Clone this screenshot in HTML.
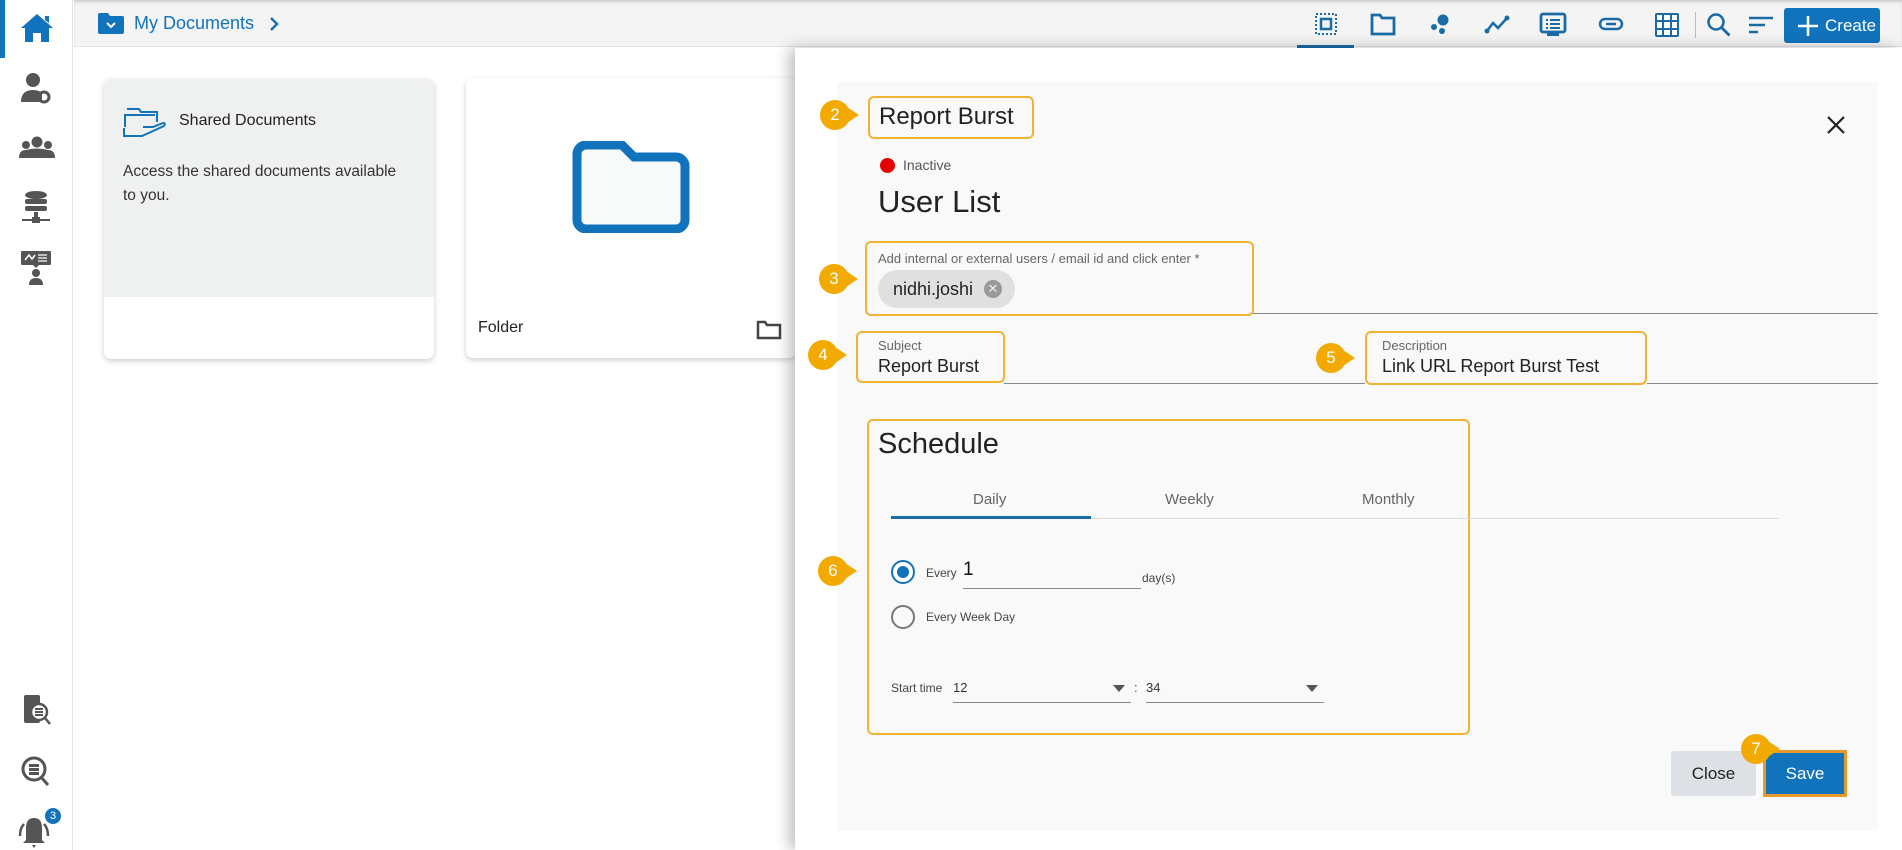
<!DOCTYPE html>
<html><head><meta charset="utf-8"><style>
*{box-sizing:border-box;margin:0;padding:0}
body{width:1902px;height:850px;overflow:hidden;background:#fff;font-family:"Liberation Sans",sans-serif;color:#222;position:relative}
.a{position:absolute}
.badge{position:absolute;width:30px;height:30px;border-radius:50%;background:#f2a900;color:#fff;font-size:17px;text-align:center;line-height:30px}
.badge:after{content:"";position:absolute;right:-9px;top:7px;border-left:12px solid #f2a900;border-top:8px solid transparent;border-bottom:8px solid transparent}
.ob{position:absolute;border:2.5px solid #f2b233;border-radius:6px}
.lbl{font-size:13px;color:#666}
.ic{position:absolute;fill:#555}
.ti{position:absolute;top:12px}
</style></head><body>
<div class="a" style="left:0;top:0;width:73px;height:850px;background:#fff;border-right:1px solid #e2e2e2"></div>
<div class="a" style="left:0;top:0;width:5px;height:58px;background:#1273bd"></div>
<svg class="a" style="left:19px;top:12px" width="36" height="32" viewBox="0 0 36 32"><path d="M18 2 L2 16 L6 16 L6 30 L14 30 L14 21 L22 21 L22 30 L30 30 L30 16 L34 16 Z M26 4 h4 v7 l-4 -3z" fill="#1273bd"/></svg>
<svg class="ic" style="left:20px;top:72px" width="32" height="32" viewBox="0 0 32 32"><circle cx="13" cy="8" r="7"/><path d="M1 30 q0-12 12-12 q6 0 9 3 l0 9z"/><circle cx="24" cy="25" r="5" fill="none" stroke="#555" stroke-width="3"/></svg>
<svg class="ic" style="left:19px;top:136px" width="36" height="26" viewBox="0 0 36 26"><circle cx="18" cy="6" r="5.5"/><circle cx="7" cy="9" r="4"/><circle cx="29" cy="9" r="4"/><path d="M0 22 q0-8 7-8 q11-3 22 0 q7 0 7 8z"/></svg>
<svg class="ic" style="left:21px;top:190px" width="30" height="36" viewBox="0 0 30 36"><ellipse cx="15" cy="5" rx="11" ry="4"/><rect x="4" y="9" width="22" height="5" rx="2"/><rect x="4" y="16" width="22" height="5" rx="2"/><rect x="13" y="22" width="4" height="6"/><rect x="1" y="29" width="28" height="2"/><rect x="11" y="27" width="8" height="6"/></svg>
<svg class="ic" style="left:20px;top:251px" width="32" height="36" viewBox="0 0 32 36"><rect x="1" y="0" width="30" height="14" rx="1"/><path d="M13 14 l3 3 l3 -3z"/><circle cx="16" cy="22" r="4"/><path d="M9 34 q0-7 7-7 q7 0 7 7z"/><path d="M5 9 l4-5 l3 4 l3-4" stroke="#fff" stroke-width="1.5" fill="none"/><path d="M18 4h9M18 7h9M18 10h9" stroke="#fff" stroke-width="1.3"/></svg>
<svg class="ic" style="left:20px;top:694px" width="32" height="34" viewBox="0 0 32 34"><rect x="4" y="1" width="16" height="28" rx="2"/><circle cx="19" cy="18" r="8" fill="#fff" stroke="#555" stroke-width="2.5"/><path d="M15 15h8M15 18h8M15 21h8" stroke="#555" stroke-width="2"/><path d="M25 24 l5 6" stroke="#555" stroke-width="2.5"/></svg>
<svg class="ic" style="left:20px;top:755px" width="32" height="34" viewBox="0 0 32 34"><circle cx="14" cy="14" r="11" fill="none" stroke="#555" stroke-width="3"/><path d="M9 9h10v3h-10zM9 13h10v3h-10zM9 17h10v3h-10z"/><path d="M21 22 l7 8" stroke="#555" stroke-width="3"/></svg>
<svg class="ic" style="left:16px;top:812px" width="36" height="38" viewBox="0 0 36 38"><path d="M18 6 q-8 0 -8 10 v12 l-3 3 h22 l-3 -3 v-12 q0-10 -8-10z"/><path d="M16 33 h4 l-2 3z"/><path d="M4 24 q0-8 4-12 M32 24 q0-8 -4-12" stroke="#555" stroke-width="2.5" fill="none"/></svg>
<div class="a" style="left:45px;top:808px;width:16px;height:16px;border-radius:50%;background:#1273bd;color:#fff;font-size:11px;text-align:center;line-height:16px">3</div>
<div class="a" style="left:74px;top:0;width:1828px;height:47px;background:#f4f4f4;border-bottom:1px solid #e3e3e3;box-shadow:0 3px 4px -2px #bbb inset"></div>
<svg class="a" style="left:98px;top:13px" width="26" height="21" viewBox="0 0 26 21"><path d="M2 0h8l2 3h12a2 2 0 0 1 2 2v14a2 2 0 0 1-2 2h-22a2 2 0 0 1-2-2v-17a2 2 0 0 1 2-2z" fill="#1273bd"/><path d="M9 10 l4 4 l4-4" stroke="#fff" stroke-width="2" fill="none"/></svg>
<div class="a" style="left:134px;top:13px;font-size:18px;color:#1273bd">My Documents</div>
<svg class="a" style="left:268px;top:16px" width="12" height="16"><path d="M3 2 l6 6 l-6 6" stroke="#1273bd" stroke-width="2.5" fill="none"/></svg>
<div class="a" style="left:1297px;top:45px;width:57px;height:3px;background:#1a6aa5"></div>
<svg class="ti" style="left:1314px" width="24" height="24" viewBox="0 0 24 24"><rect x="2" y="2" width="20" height="20" fill="none" stroke="#1a6aa5" stroke-width="2" stroke-dasharray="2 2"/><rect x="7" y="7" width="10" height="10" fill="none" stroke="#1a6aa5" stroke-width="2.5"/></svg>
<svg class="ti" style="left:1370px" width="26" height="24" viewBox="0 0 26 24"><path d="M2 3h8l2 3h12v16h-22z" fill="none" stroke="#1a6aa5" stroke-width="2.8"/></svg>
<svg class="ti" style="left:1428px" width="24" height="24" viewBox="0 0 24 24"><circle cx="15" cy="8" r="5.5" fill="#1a6aa5"/><circle cx="6" cy="15" r="3" fill="#1a6aa5"/><circle cx="14" cy="19" r="3" fill="#1a6aa5"/></svg>
<svg class="ti" style="left:1484px" width="26" height="24" viewBox="0 0 26 24"><path d="M3 19 l6-8 l5 5 l9-10" stroke="#1a6aa5" stroke-width="2.5" fill="none"/><circle cx="3" cy="19" r="2.5" fill="#1a6aa5"/><circle cx="23" cy="6" r="2.5" fill="#1a6aa5"/></svg>
<svg class="ti" style="left:1539px" width="28" height="26" viewBox="0 0 28 26"><rect x="2" y="2" width="24" height="18" rx="2" fill="none" stroke="#1a6aa5" stroke-width="2.8"/><path d="M7 8h2M11 8h10M7 12h2M11 12h10M7 16h2M11 16h10" stroke="#1a6aa5" stroke-width="2"/><rect x="8" y="21" width="12" height="3" fill="#1a6aa5"/></svg>
<svg class="ti" style="left:1598px" width="26" height="24" viewBox="0 0 26 24"><rect x="2" y="7" width="22" height="10" rx="5" fill="none" stroke="#1a6aa5" stroke-width="2.5"/><path d="M8 12h10" stroke="#1a6aa5" stroke-width="2.5"/></svg>
<svg class="ti" style="left:1654px" width="26" height="26" viewBox="0 0 26 26"><rect x="1" y="1" width="24" height="24" rx="2" fill="#1a6aa5"/><path d="M3 3h5v5h-5zM10 3h6v5h-6zM18 3h5v5h-5zM3 10h5v6h-5zM10 10h6v6h-6zM18 10h5v6h-5zM3 18h5v5h-5zM10 18h6v5h-6zM18 18h5v5h-5z" fill="#fff"/></svg>
<div class="a" style="left:1695px;top:12px;width:1px;height:26px;background:#bbb"></div>
<svg class="ti" style="left:1706px" width="26" height="26" viewBox="0 0 26 26"><circle cx="10" cy="10" r="7.5" fill="none" stroke="#1a6aa5" stroke-width="2.5"/><path d="M15.5 15.5 l8 8" stroke="#1a6aa5" stroke-width="2.8"/></svg>
<svg class="ti" style="left:1748px;top:15px" width="26" height="20" viewBox="0 0 26 20"><path d="M1 3h24M1 10h16M1 17h9" stroke="#1a6aa5" stroke-width="2.5"/></svg>
<div class="a" style="left:1784px;top:8px;width:96px;height:35px;background:#1273bd;border-radius:3px;color:#fff;font-size:17px;line-height:35px;padding-left:41px">Create</div>
<svg class="a" style="left:1797px;top:15px" width="22" height="22"><path d="M11 1v20M1 11h20" stroke="#fff" stroke-width="2.5"/></svg>
<div class="a" style="left:104px;top:79px;width:330px;height:280px;background:#fff;border-radius:7px;box-shadow:0 2px 6px rgba(0,0,0,.2);overflow:hidden">
 <div style="height:218px;background:#eff0f0"></div>
</div>
<svg class="a" style="left:123px;top:107px" width="44" height="30" viewBox="0 0 44 30"><path d="M4 2h12l2 3h16v10M2 20v-12h30" fill="none" stroke="#1273bd" stroke-width="2"/><path d="M1 21 v8 h18 l22-10 q2-3 -1-3 l-10 4 h-10" fill="none" stroke="#1273bd" stroke-width="2"/></svg>
<div class="a" style="left:179px;top:112px;font-size:16px;color:#222">Shared Documents</div>
<div class="a" style="left:123px;top:160px;font-size:15.5px;line-height:24px;color:#333;width:285px">Access the shared documents available to you.</div>
<div class="a" style="left:466px;top:78px;width:330px;height:280px;background:#fff;border-radius:7px;box-shadow:0 2px 6px rgba(0,0,0,.2)"></div>
<svg class="a" style="left:572px;top:141px" width="118" height="92" viewBox="0 0 118 92"><path d="M14 4h36l12 12h42a9 9 0 0 1 9 9v54a9 9 0 0 1-9 9h-90a9 9 0 0 1-9-9v-66a9 9 0 0 1 9-9z" fill="#f8f9f9" stroke="#1273bd" stroke-width="9"/></svg>
<div class="a" style="left:478px;top:319px;font-size:16px;color:#222">Folder</div>
<svg class="a" style="left:756px;top:320px" width="26" height="20"><path d="M2 2h7l2 3h13v13h-22z" fill="none" stroke="#444" stroke-width="2.5"/></svg>
<div class="a" style="left:795px;top:48px;width:1107px;height:802px;background:#fff;box-shadow:-6px 0 14px rgba(0,0,0,.25)"></div>
<div class="a" style="left:837px;top:82px;width:1041px;height:749px;background:#f9f9f9"></div>
<div class="ob" style="left:868px;top:96px;width:166px;height:43px"></div>
<div class="a" style="left:879px;top:103px;font-size:24px;color:#222">Report Burst</div>
<div class="badge" style="left:820px;top:100px">2</div>
<svg class="a" style="left:1826px;top:115px" width="20" height="20"><path d="M2 2l16 16M18 2l-16 16" stroke="#222" stroke-width="2.2"/></svg>
<div class="a" style="left:880px;top:158px;width:15px;height:15px;border-radius:50%;background:#e50000"></div>
<div class="a" style="left:903px;top:157px;font-size:14px;color:#555">Inactive</div>
<div class="a" style="left:878px;top:184px;font-size:31px;color:#222">User List</div>
<div class="ob" style="left:865px;top:241px;width:389px;height:75px"></div>
<div class="a lbl" style="left:878px;top:251px">Add internal or external users / email id and click enter *</div>
<div class="a" style="left:878px;top:270px;width:137px;height:38px;border-radius:19px;background:#e0e0e0"></div>
<div class="a" style="left:893px;top:279px;font-size:18px;color:#222">nidhi.joshi</div>
<div class="a" style="left:984px;top:280px;width:18px;height:18px;border-radius:50%;background:#999;color:#eee;font-size:13px;line-height:18px;text-align:center">✕</div>
<div class="a" style="left:1253px;top:313px;width:625px;height:1px;background:#888"></div>
<div class="badge" style="left:819px;top:264px">3</div>
<div class="ob" style="left:856px;top:331px;width:149px;height:52px"></div>
<div class="a lbl" style="left:878px;top:338px">Subject</div>
<div class="a" style="left:878px;top:356px;font-size:18px;color:#222">Report Burst</div>
<div class="badge" style="left:808px;top:340px">4</div>
<div class="ob" style="left:1365px;top:331px;width:282px;height:54px"></div>
<div class="a lbl" style="left:1382px;top:338px">Description</div>
<div class="a" style="left:1382px;top:356px;font-size:18px;color:#222">Link URL Report Burst Test</div>
<div class="badge" style="left:1316px;top:343px">5</div>
<div class="a" style="left:1004px;top:383px;width:361px;height:1px;background:#888"></div>
<div class="a" style="left:1647px;top:383px;width:231px;height:1px;background:#888"></div>
<div class="ob" style="left:867px;top:419px;width:603px;height:316px"></div>
<div class="a" style="left:878px;top:428px;font-size:29px;color:#222">Schedule</div>
<div class="a" style="left:891px;top:518px;width:888px;height:1px;background:#ddd"></div>
<div class="a" style="left:891px;top:516px;width:200px;height:3px;background:#1a6aa5"></div>
<div class="a" style="left:973px;top:491px;font-size:15px;color:#666">Daily</div>
<div class="a" style="left:1165px;top:491px;font-size:15px;color:#666">Weekly</div>
<div class="a" style="left:1362px;top:491px;font-size:15px;color:#666">Monthly</div>
<div class="badge" style="left:818px;top:556px">6</div>
<div class="a" style="left:891px;top:560px;width:24px;height:24px;border-radius:50%;border:2.5px solid #1273bd;background:#fff"></div>
<div class="a" style="left:897px;top:566px;width:12px;height:12px;border-radius:50%;background:#1273bd"></div>
<div class="a" style="left:926px;top:566px;font-size:12px;color:#444">Every</div>
<div class="a" style="left:963px;top:559px;font-size:19px;color:#111">1</div>
<div class="a" style="left:963px;top:588px;width:178px;height:1px;background:#888"></div>
<div class="a" style="left:1142px;top:571px;font-size:12px;color:#444">day(s)</div>
<div class="a" style="left:891px;top:605px;width:24px;height:24px;border-radius:50%;border:2px solid #777"></div>
<div class="a" style="left:926px;top:610px;font-size:12px;color:#444">Every Week Day</div>
<div class="a" style="left:891px;top:681px;font-size:12px;color:#444">Start time</div>
<div class="a" style="left:953px;top:680px;font-size:13px;color:#333">12</div>
<div class="a" style="left:953px;top:702px;width:178px;height:1px;background:#888"></div>
<div class="a" style="left:1113px;top:685px;border-top:7px solid #555;border-left:6px solid transparent;border-right:6px solid transparent"></div>
<div class="a" style="left:1134px;top:680px;font-size:13px;color:#555">:</div>
<div class="a" style="left:1146px;top:680px;font-size:13px;color:#333">34</div>
<div class="a" style="left:1146px;top:702px;width:178px;height:1px;background:#888"></div>
<div class="a" style="left:1306px;top:685px;border-top:7px solid #555;border-left:6px solid transparent;border-right:6px solid transparent"></div>
<div class="a" style="left:1671px;top:751px;width:85px;height:45px;background:#dde1e6;border-radius:3px;font-size:17px;line-height:45px;text-align:center;color:#222">Close</div>
<div class="a" style="left:1763px;top:750px;width:84px;height:47px;border:3px solid #e59a2b;background:#1273bd;font-size:17px;line-height:41px;text-align:center;color:#fff">Save</div>
<div class="badge" style="left:1741px;top:734px">7</div>
</body></html>
